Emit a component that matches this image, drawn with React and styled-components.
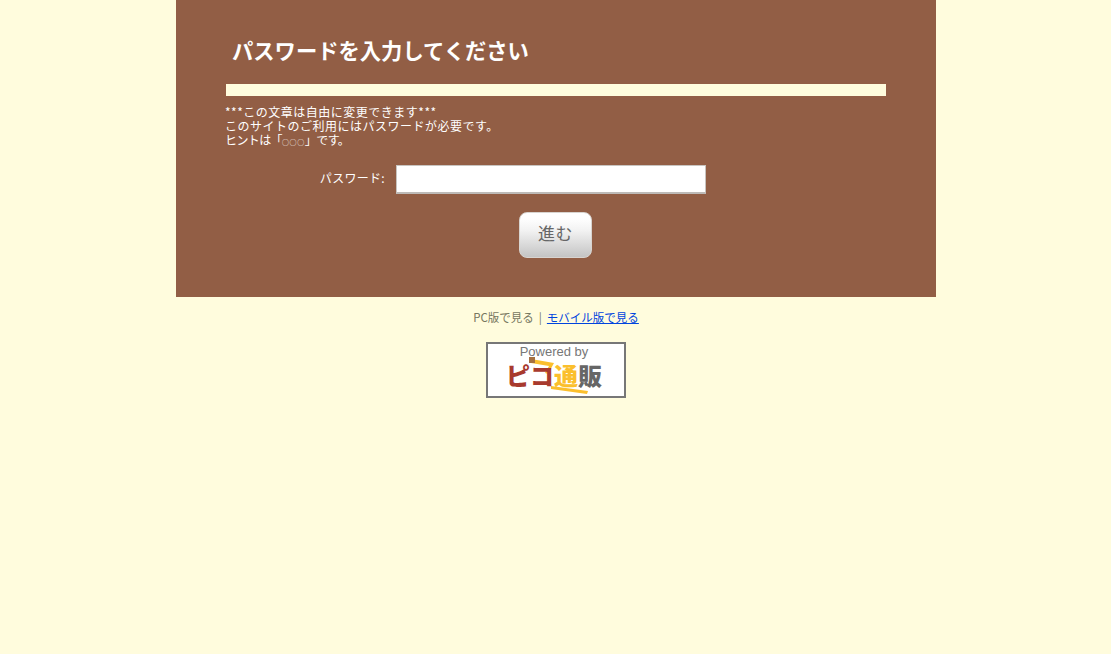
import React from 'react'
import styled, { createGlobalStyle } from 'styled-components'

const jp = `"Noto Sans CJK JP", "Liberation Sans", sans-serif`

const GlobalStyle = createGlobalStyle`
    html, body {
        margin: 0;
        padding: 0;
        background: #fffcdd;
        font-family: ${jp};
    }
`

const Page = styled.div`
    width: 760px;
    margin: 0 auto;
    position: relative;
    left: 0.5px;
`

const Panel = styled.div`
    background: #925e45;
    height: 297px;
    box-sizing: border-box;
    padding: 35px 50px 0;
    color: #fff;
`

const Title = styled.h1`
    margin: 0 0 0 6px;
    height: 31px;
    font-size: 21.3px;
    line-height: 30px;
    font-weight: 700;
`

const Bar = styled.div`
    height: 12px;
    margin-top: 18px;
    background: #fffcdd;
`

const Message = styled.p`
    margin: 9px 0 0 -1px;
    font-size: 12px;
    line-height: 14px;
    letter-spacing: 0.5px;
`

const Hint = styled.span`
    letter-spacing: -0.6px;
`

const Circles = styled.span`
    font-size: 7px;
    letter-spacing: 0.6px;
`

const FormRow = styled.div`
    display: flex;
    align-items: center;
    margin-top: 16px;
    height: 29px;
`

const Label = styled.label`
    width: 159px;
    text-align: right;
    font-size: 12px;
    letter-spacing: 0.3px;
    padding-bottom: 4px;
`

const Input = styled.input`
    width: 310px;
    height: 29px;
    margin-left: 11px;
    box-sizing: border-box;
    background: #fff;
    border: 1px solid #c8c4c0;
    border-bottom: 2px solid #bdbab7;
    padding: 0 4px;
    outline: none;
`

const ButtonRow = styled.div`
    display: flex;
    justify-content: center;
    margin-top: 18px;
    padding-right: 1px;
`

const Button = styled.button`
    width: 73px;
    height: 46px;
    box-sizing: border-box;
    padding: 0 0 5px;
    border: 1px solid #d8d4d0;
    border-radius: 8px;
    background: linear-gradient(#ffffff 12%, #f2f2f2 40%, #c4c4c4 100%);
    color: #666;
    font-family: "Noto Sans CJK JP", sans-serif;
    font-size: 17px;
    font-weight: 400;
    letter-spacing: 0.5px;
`

const Footer = styled.div`
    display: flex;
    flex-direction: column;
    align-items: center;
    padding-top: 12px;
`

const Links = styled.div`
    font-size: 11.5px;
    line-height: 16px;
    color: #77775f;
    display: flex;
    gap: 5px;
`

const Divider = styled.span`
    color: #77775f;
`

const MobileLink = styled.a`
    color: #0044dd;
    text-decoration: underline;
`

const Badge = styled.div`
    position: relative;
    width: 140px;
    height: 56px;
    margin-top: 17px;
    box-sizing: border-box;
    border: 2px solid #777;
    background: #fff;
    overflow: hidden;
    display: flex;
    flex-direction: column;
    align-items: center;
`

const Powered = styled.div`
    font-family: "Liberation Sans", sans-serif;
    font-size: 13px;
    line-height: 14px;
    color: #777;
    margin-top: 1px;
    margin-left: -4px;
`

const BrandRow = styled.div`
    display: flex;
    margin-top: 1px;
    margin-left: -4px;
    font-family: ${jp};
    font-weight: 900;
    font-size: 24px;
    line-height: 30px;
    position: relative;
    z-index: 1;
`

const BrandPart = styled.span`
    color: ${props => props.color};
`

const Swoosh = styled.svg`
    position: absolute;
    left: 0;
    top: 0;
`

function App() {
    return (
        <Page>
            <GlobalStyle />
            <Panel>
                <Title>パスワードを入力してください</Title>
                <Bar />
                <Message>
                    ***この文章は自由に変更できます***<br />
                    このサイトのご利用にはパスワードが必要です。<br />
                    <Hint>ヒントは「<Circles>○○○</Circles>」です。</Hint>
                </Message>
                <FormRow>
                    <Label htmlFor="password">パスワード:</Label>
                    <Input id="password" type="password" />
                </FormRow>
                <ButtonRow>
                    <Button type="button">進む</Button>
                </ButtonRow>
            </Panel>
            <Footer>
                <Links>
                    <span>PC版で見る</span>
                    <Divider>|</Divider>
                    <MobileLink href="#">モバイル版で見る</MobileLink>
                </Links>
                <Badge>
                    <Swoosh width="136" height="52" viewBox="0 0 136 52">
                        <path d="M43 15 L66 19 L60 30 L57 29 L61 22 L43 19 Z" fill="#fbbf2d" />
                        <path d="M63 42 L100 47 L99 50 L63 45 Z" fill="#fbbf2d" />
                        <rect x="41" y="13" width="6" height="6" fill="#a5703f" />
                    </Swoosh>
                    <Powered>Powered by</Powered>
                    <BrandRow>
                        <BrandPart color="#a83a2e">ピコ</BrandPart>
                        <BrandPart color="#fbbf2d">通</BrandPart>
                        <BrandPart color="#666">販</BrandPart>
                    </BrandRow>
                </Badge>
            </Footer>
        </Page>
    )
}

export default App
